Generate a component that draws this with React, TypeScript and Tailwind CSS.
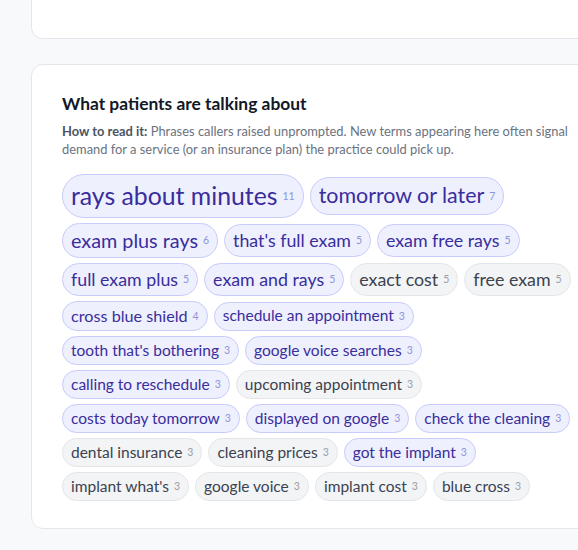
import React from "react";

type Chip = { t: string; n: number; b: boolean };

const rows: Chip[][] = [
  [
    { t: "rays about minutes", n: 11, b: true },
    { t: "tomorrow or later", n: 7, b: true },
  ],
  [
    { t: "exam plus rays", n: 6, b: true },
    { t: "that's full exam", n: 5, b: true },
    { t: "exam free rays", n: 5, b: true },
  ],
  [
    { t: "full exam plus", n: 5, b: true },
    { t: "exam and rays", n: 5, b: true },
    { t: "exact cost", n: 5, b: false },
    { t: "free exam", n: 5, b: false },
  ],
  [
    { t: "cross blue shield", n: 4, b: true },
    { t: "schedule an appointment", n: 3, b: true },
  ],
  [
    { t: "tooth that's bothering", n: 3, b: true },
    { t: "google voice searches", n: 3, b: true },
  ],
  [
    { t: "calling to reschedule", n: 3, b: true },
    { t: "upcoming appointment", n: 3, b: false },
  ],
  [
    { t: "costs today tomorrow", n: 3, b: true },
    { t: "displayed on google", n: 3, b: true },
    { t: "check the cleaning", n: 3, b: true },
  ],
  [
    { t: "dental insurance", n: 3, b: false },
    { t: "cleaning prices", n: 3, b: false },
    { t: "got the implant", n: 3, b: true },
  ],
  [
    { t: "implant what's", n: 3, b: false },
    { t: "google voice", n: 3, b: false },
    { t: "implant cost", n: 3, b: false },
    { t: "blue cross", n: 3, b: false },
  ],
];

const sizeFor: Record<number, string> = {
  11: "text-[24.8px] h-[44px]",
  7: "text-[21.4px] h-[38px]",
  6: "text-[19.8px] h-[35px]",
  5: "text-[17.8px] h-[33px]",
  4: "text-[16.2px] h-[30px]",
  3: "text-[15.5px] h-[29px]",
};

function ChipView({ c }: { c: Chip }) {
  const base =
    "flex items-center rounded-full border px-[8px] leading-none whitespace-nowrap " +
    sizeFor[c.n];
  const color = c.b
    ? "bg-[#eef0fe] border-[#c7ccfa] text-[#3a2d9c]"
    : "bg-[#f3f4f6] border-[#e3e5e9] text-[#3b4250]";
  const countColor = c.b ? "text-[#8f94d8]" : "text-[#9a9ea7]";
  return (
    <div className={base + " " + color}>
      <span>{c.t}</span>
      <span className={"ml-[5px] text-[10.5px] leading-none " + countColor}>{c.n}</span>
    </div>
  );
}

export default function App() {
  return (
    <div
      className="w-[578px] h-[550px] overflow-hidden bg-[#f8f9fb]"
      style={{ fontFamily: "Lato, 'Noto Sans', sans-serif" }}
    >
      <div className="pl-[31px]">
        <div className="w-[600px] h-[39px] bg-white border-x border-b border-[#e4e6eb] rounded-b-[12px]" />
        <div className="mt-[25px] w-[600px] bg-white border border-[#e4e6eb] rounded-[12px] pl-[30px] pr-[30px] pt-[27px] pb-[27px]">
          <h2 className="text-[17.4px] font-bold leading-[24px] text-[#111827]">
            What patients are talking about
          </h2>
          <p className="mt-[6px] text-[12.9px] leading-[18px] text-[#6b7280] whitespace-nowrap">
            <span className="font-bold text-[#4b5563]">How to read it:</span> Phrases callers raised
            unprompted. New terms appearing here often signal
            <br />
            demand for a service (or an insurance plan) the practice could pick up.
          </p>
          <div className="mt-[16px] flex flex-col gap-y-[5px]">
            {rows.map((r, i) => (
              <div key={i} className="flex items-center gap-x-[6px]">
                {r.map((c, j) => (
                  <ChipView key={j} c={c} />
                ))}
              </div>
            ))}
          </div>
        </div>
      </div>
    </div>
  );
}
